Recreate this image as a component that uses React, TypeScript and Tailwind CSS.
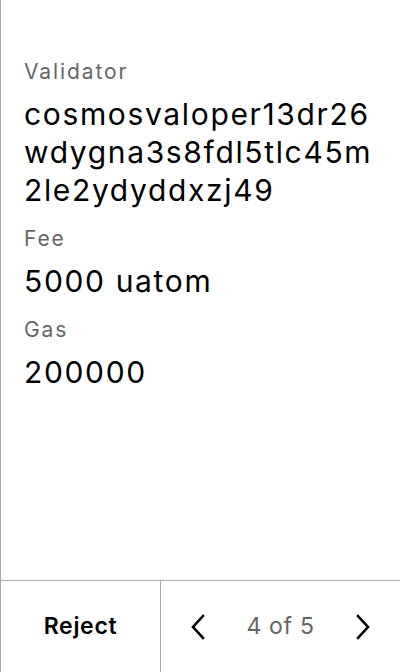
import React from 'react';

const FIELDS = [
  { label: 'Validator', value: 'cosmosvaloper13dr26wdygna3s8fdl5tlc45m2le2ydyddxzj49' },
  { label: 'Fee', value: '5000 uatom' },
  { label: 'Gas', value: '200000' },
];

const Chevron: React.FC<{ dir: 'left' | 'right' }> = ({ dir }) => (
  <svg width="16" height="26" viewBox="0 0 16 26" fill="none" stroke="#000" strokeWidth="2.6" strokeLinecap="square">
    {dir === 'left' ? <path d="M13 2 L3 13 L13 24" /> : <path d="M3 2 L13 13 L3 24" />}
  </svg>
);

const App: React.FC = () => {
  return (
    <div className="w-[400px] h-[672px] bg-white border-l border-[#aaaaaa] flex flex-col font-['Inter',sans-serif]">
      <div className="flex-1 pl-[23px] pr-6 pt-[58px] flex flex-col gap-[16px]">
        {FIELDS.map((f) => (
          <div key={f.label} className="flex flex-col gap-[9px]">
            <div className="text-[21px] leading-[28px] tracking-[0.09em] text-[#666666]">{f.label}</div>
            <div className="text-[30px] leading-[38px] tracking-[0.055em] text-black break-all">{f.value}</div>
          </div>
        ))}
      </div>
      <div className="h-[92px] border-t border-[#aaaaaa] flex">
        <button className="w-[160px] border-r border-[#aaaaaa] flex items-center justify-center text-[23px] tracking-[0.03em] font-semibold text-black">
          Reject
        </button>
        <div className="flex-1 flex items-center justify-center gap-10">
          <Chevron dir="left" />
          <span className="text-[23px] tracking-[0.03em] text-[#666666]">4 of 5</span>
          <Chevron dir="right" />
        </div>
      </div>
    </div>
  );
};

export default App;
